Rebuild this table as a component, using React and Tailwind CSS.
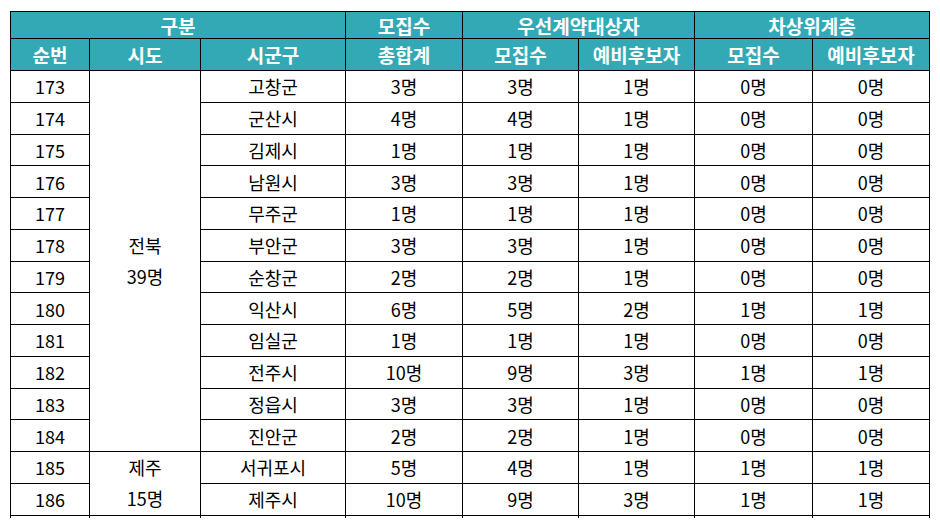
import React from "react";

const rows = [
  ["173", "고창군", "3명", "3명", "1명", "0명", "0명"],
  ["174", "군산시", "4명", "4명", "1명", "0명", "0명"],
  ["175", "김제시", "1명", "1명", "1명", "0명", "0명"],
  ["176", "남원시", "3명", "3명", "1명", "0명", "0명"],
  ["177", "무주군", "1명", "1명", "1명", "0명", "0명"],
  ["178", "부안군", "3명", "3명", "1명", "0명", "0명"],
  ["179", "순창군", "2명", "2명", "1명", "0명", "0명"],
  ["180", "익산시", "6명", "5명", "2명", "1명", "1명"],
  ["181", "임실군", "1명", "1명", "1명", "0명", "0명"],
  ["182", "전주시", "10명", "9명", "3명", "1명", "1명"],
  ["183", "정읍시", "3명", "3명", "1명", "0명", "0명"],
  ["184", "진안군", "2명", "2명", "1명", "0명", "0명"],
  ["185", "서귀포시", "5명", "4명", "1명", "1명", "1명"],
  ["186", "제주시", "10명", "9명", "3명", "1명", "1명"],
];

const groups = { 0: ["전북", "39명", 12], 12: ["제주", "15명", 2] };

const th = "border border-black font-bold text-white text-[19px] p-0 text-center";
const td = "border border-black p-0 text-center h-[31.75px]";

export default function App() {
  return (
    <div
      className="w-[940px] h-[528px] overflow-hidden bg-white pl-[10px] pt-[11px] text-black text-[18px]"
      style={{ fontFamily: '"Noto Sans CJK KR", "Noto Sans", sans-serif' }}
    >
      <table className="table-fixed border-collapse w-[920px] leading-none">
        <colgroup>
          <col className="w-[79px]" />
          <col className="w-[111px]" />
          <col className="w-[145px]" />
          <col className="w-[117px]" />
          <col className="w-[116px]" />
          <col className="w-[116px]" />
          <col className="w-[118px]" />
          <col className="w-[117px]" />
        </colgroup>
        <thead className="bg-[#33a9b5]">
          <tr>
            <th colSpan={3} className={th + " h-[27px]"}>구분</th>
            <th className={th}>모집수</th>
            <th colSpan={2} className={th}>우선계약대상자</th>
            <th colSpan={2} className={th}>차상위계층</th>
          </tr>
          <tr>
            <th className={th + " h-[32px]"}>순번</th>
            <th className={th}>시도</th>
            <th className={th}>시군구</th>
            <th className={th}>총합계</th>
            <th className={th}>모집수</th>
            <th className={th}>예비후보자</th>
            <th className={th}>모집수</th>
            <th className={th}>예비후보자</th>
          </tr>
        </thead>
        <tbody>
          {rows.map((r, i) => (
            <tr key={r[0]}>
              <td className={td}>{r[0]}</td>
              {groups[i] && (
                <td rowSpan={groups[i][2]} className="border border-black p-0 text-center leading-[31px]">
                  {groups[i][0]}
                  <br />
                  {groups[i][1]}
                </td>
              )}
              {r.slice(1).map((c, j) => (
                <td key={j} className={td}>{c}</td>
              ))}
            </tr>
          ))}
          <tr>
            {Array.from({ length: 8 }).map((_, j) => (
              <td key={j} className="border-x border-black h-[3px] p-0"></td>
            ))}
          </tr>
        </tbody>
      </table>
    </div>
  );
}
